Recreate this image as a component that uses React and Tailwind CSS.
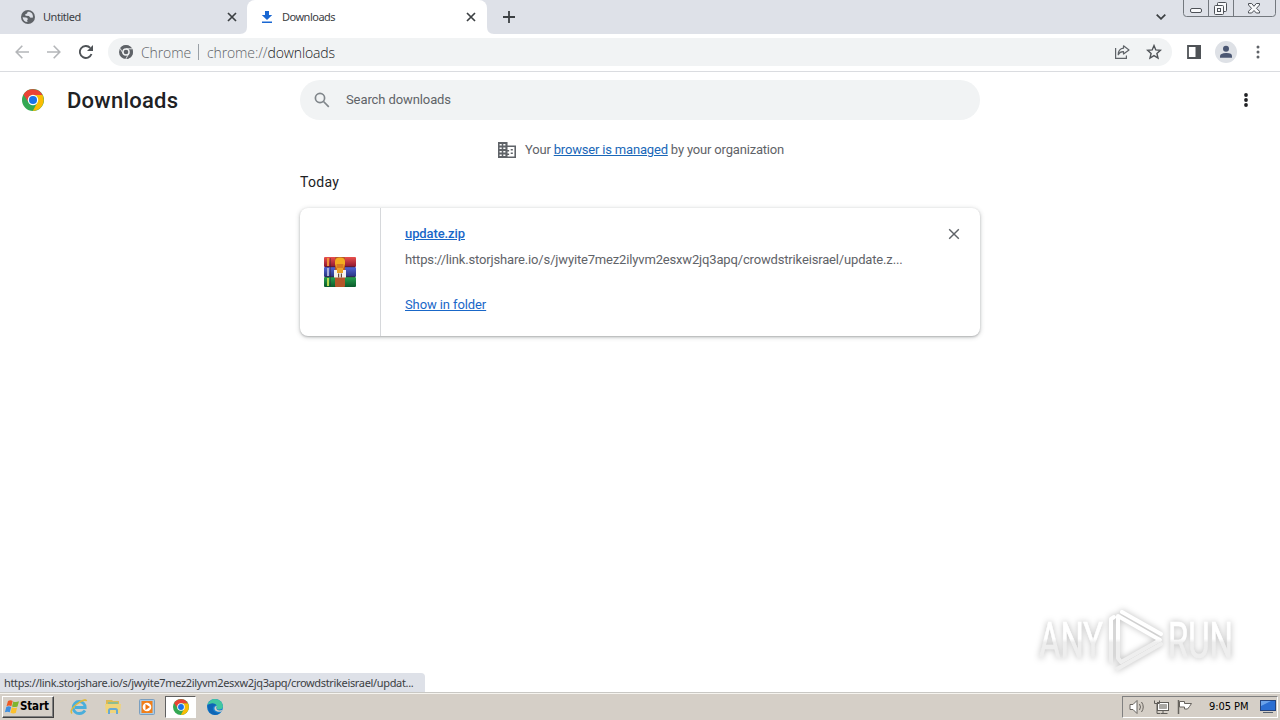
import React from "react";

function ChromeLogo({ size, mono = false }) {
  const c = mono ? ["#5f6368", "#5f6368", "#5f6368", "#5f6368", "#f1f3f4"] : ["#ea4335", "#fbbc04", "#34a853", "#1a73e8", "#fff"];
  return (
    <svg width={size} height={size} viewBox="0 0 48 48" className="shrink-0">
      <circle cx="24" cy="24" r="24" fill={c[2]} />
      <path d="M24 13h20.8A24 24 0 0 1 23.5 48L33.5 29.5A11 11 0 0 0 24 13Z" fill={c[1]} />
      <path d="M3.2 12A24 24 0 0 1 44.8 13H24a11 11 0 0 0-9.5 16.5Z" fill={c[0]} />
      {mono && <path d="M24 13h21M33.5 29.5 23.5 48M14.5 29.5 3.2 11" stroke="#f1f3f4" strokeWidth="3" fill="none" />}
      <circle cx="24" cy="24" r={mono ? 13 : 11.5} fill={c[4]} />
      <circle cx="24" cy="24" r={mono ? 8 : 8.8} fill={c[3]} />
    </svg>
  );
}

function Cross({ size, color, width }) {
  return (
    <svg width={size} height={size} viewBox="0 0 10 10" className="shrink-0">
      <path d="M1 1 9 9M9 1 1 9" stroke={color} strokeWidth={width} />
    </svg>
  );
}

function Dots({ color, r }) {
  return (
    <svg width="6" height="16" viewBox="0 0 6 16" className="shrink-0">
      <circle cx="3" cy="3" r={r} fill={color} />
      <circle cx="3" cy="8" r={r} fill={color} />
      <circle cx="3" cy="13" r={r} fill={color} />
    </svg>
  );
}

function TabStrip() {
  return (
    <div className="flex h-[34px] shrink-0 bg-[#dee1e8] font-['Noto_Sans',sans-serif] text-[11px] text-[#3c4043]">
      <div className="flex w-[247px] items-center pl-[21px] pr-[10px]">
        <svg width="14" height="14" viewBox="0 0 14 14" className="shrink-0">
          <circle cx="7" cy="7" r="7" fill="#5f6368" />
          <path d="M1.6 7.2 5 7.4q1.8.1 1.8 1.8l-.7 1.2.5 1.6Q2.2 11.8 1.6 7.2Z" fill="#dee1e8" />
          <path d="M6.7 1.8 6 3.4l-1.8.9.3 1.5 3.4.1 1.6 1.9 2.5-.3Q12 2.600 8.300 1.800Z" fill="#dee1e8" />
        </svg>
        <span className="ml-2 tracking-[-0.45px]">Untitled</span>
        <span className="ml-auto"><Cross size={10} color="#3c4043" width={1.7} /></span>
      </div>
      <div className="relative flex w-[240px] items-center rounded-t-lg bg-white pl-[14px] pr-[11px]">
        <svg width="7" height="7" viewBox="0 0 7 7" className="absolute -left-[7px] bottom-0"><path d="M7 0v7H0Q7 7 7 0Z" fill="#fff" /></svg>
        <svg width="7" height="7" viewBox="0 0 7 7" className="absolute -right-[7px] bottom-0"><path d="M0 0v7h7Q0 7 0 0Z" fill="#fff" /></svg>
        <svg width="12" height="14" viewBox="0 0 12 14" className="shrink-0">
          <path d="M4 1h4v4h3.200L6 10 .8 5H4Z" fill="#1967d2" />
          <path d="M1 11.500h10v1.500H1Z" fill="#1967d2" />
        </svg>
        <span className="ml-[9px] tracking-[-0.5px]">Downloads</span>
        <span className="ml-auto"><Cross size={10} color="#3c4043" width={1.7} /></span>
      </div>
      <div className="flex items-center pl-4">
        <svg width="12" height="12" viewBox="0 0 12 12"><path d="M6 0v12M0 6h12" stroke="#3c4043" strokeWidth="1.800" /></svg>
      </div>
      <div className="ml-auto flex">
        <div className="flex w-[27px] items-center">
          <svg width="10" height="6" viewBox="0 0 10 6"><path d="m.7.7 4.300 4.100L9.300.7" fill="none" stroke="#3c4043" strokeWidth="1.800" /></svg>
        </div>
        <svg width="97" height="18" viewBox="0 0 97 18" fill="none" stroke="#73787e">
          <path d="M.5 0v13.500q0 3 3 3h86q3 0 3-3V0M25.500 0v16M50.500 0v16" strokeWidth="1" />
          <g stroke="#4d5157" fill="#f8f9fb">
            <rect x="7.500" y="8.500" width="11" height="4" rx="1.500" />
            <rect x="34.500" y="2.500" width="9" height="9" rx="1" />
            <rect x="31.500" y="5.500" width="9" height="9" rx="1" />
            <rect x="34.500" y="8.500" width="3" height="3" />
            <path d="M65.500 3.500h3.200l2.300 2.800 2.300-2.800h3.200v1.500L73.500 8.300l3 3v1.700h-3.200l-2.300-2.500-2.300 2.500h-3.200v-1.700l3-3-3-3.300Z" />
          </g>
        </svg>
      </div>
    </div>
  );
}

function Toolbar() {
  return (
    <div className="flex h-[38px] shrink-0 items-center border-b border-[#dadce0] bg-white pb-px pl-[15px] pr-[19px]">
      <svg width="14" height="14" viewBox="0 0 14 14" fill="none" stroke="#b4b6b9" strokeWidth="1.600"><path d="M14 7H1.500M7.300.8 1.200 7l6.100 6.200" /></svg>
      <svg width="14" height="14" viewBox="0 0 14 14" fill="none" stroke="#b4b6b9" strokeWidth="1.600" className="ml-[18px]"><path d="M0 7h12.500M6.700.8 12.800 7l-6.100 6.200" /></svg>
      <svg width="14" height="14" viewBox="0 0 14 14" className="ml-[18px]">
        <path d="M12.500 9A6 6 0 1 1 11.200 2.800" fill="none" stroke="#4f5357" strokeWidth="1.900" />
        <path d="M14 0v6H8Z" fill="#4f5357" />
      </svg>
      <div className="ml-[15px] flex h-7 w-[1064px] items-center rounded-full bg-[#f1f3f4] pl-[11px] pr-[10px] font-['Open_Sans',sans-serif] text-[14px] font-light text-[#5f6368]">
        <ChromeLogo size={14} mono />
        <span className="ml-2 w-[49px] whitespace-nowrap tracking-[-0.1px]">Chrome</span>
        <span className="ml-2 h-4 w-px bg-[#9aa0a6]" />
        <span className="ml-2 whitespace-nowrap tracking-[-0.12px]">chrome://<span className="text-[#202124]">downloads</span></span>
        <svg width="16" height="14" viewBox="0 0 16 14" className="ml-auto" fill="none" stroke="#5f6368" strokeWidth="1.200">
          <path d="M1.600 3v10.400h10.800V10.500" />
          <path d="M9.500.8 15 4.900 9.500 9V6.700Q6 6.500 4.200 9.800 4.300 3.800 9.500 3.200Z" strokeLinejoin="round" />
        </svg>
        <svg width="16" height="16" viewBox="0 0 16 16" className="ml-4" fill="none" stroke="#4f5357" strokeWidth="1.400"><path d="m8 1.600 1.800 4.300 4.600.4-3.500 3.100 1.100 4.600L8 11.600 4 14l1.100-4.600L1.600 6.300l4.600-.4Z" /></svg>
      </div>
      <svg width="14" height="14" viewBox="0 0 14 14" className="ml-[15px]"><path d="M1 1h12v12H1Z" fill="#fff" stroke="#4f5357" strokeWidth="1.800" /><path d="M8.500 0H14v14H8.500Z" fill="#4f5357" /></svg>
      <svg width="22" height="22" viewBox="0 0 22 22" className="ml-[14px]"><circle cx="11" cy="11" r="11" fill="#dee1e6" /><circle cx="11" cy="7.800" r="3" fill="#4a5672" /><path d="M5 16.800v-1.600Q5 12.200 11 12t6 3.200v1.600Z" fill="#4a5672" /></svg>
      <span className="ml-auto"><Dots color="#5f6368" r={1.5} /></span>
    </div>
  );
}

function ArchiveIcon() {
  return (
    <svg width="32" height="32" viewBox="0 0 32 32">
      <defs>
        <linearGradient id="red" x2="0" y2="1"><stop stopColor="#e9504c" /><stop offset="1" stopColor="#8d1530" /></linearGradient>
        <linearGradient id="blue" x2="0" y2="1"><stop stopColor="#5365d8" /><stop offset="1" stopColor="#27347f" /></linearGradient>
        <linearGradient id="green" x2="0" y2="1"><stop stopColor="#26a34e" /><stop offset="1" stopColor="#0b5a2c" /></linearGradient>
      </defs>
      <rect x="0" y="1" width="32" height="10" rx="1" fill="url(#red)" />
      <rect x="0" y="11" width="32" height="10" rx="1" fill="url(#blue)" />
      <rect x="0" y="21" width="32" height="10" rx="1" fill="url(#green)" />
      <path d="M1 10.800h30M1 20.800h30" stroke="#3a2030" strokeWidth=".7" />
      <path d="M4 2v8" stroke="#f0903a" strokeWidth="2" />
      <path d="M4 12v8" stroke="#aab0d8" strokeWidth="2" />
      <path d="M4 22v8" stroke="#b8d850" strokeWidth="2" />
      <path d="M6.500 2v28" stroke="#301c30" strokeOpacity=".4" />
      <rect x="11" y="1" width="10" height="30" rx="1" fill="#b5562a" />
      <path d="M11 8V5.500q0-4 5-4t5 4V8l-1.500 4h-7Z" fill="#f3ad20" />
      <path d="M12.500 8h7v6h-7Z" fill="#d87a22" />
      <path d="M10 14h3.500v2h5v-2H22v7.500H10Z" fill="#f5f2ee" />
      <path d="M13 12h6v5h-6Z" fill="#eba128" />
      <path d="M14 17.500h1.200v4H14ZM16.800 17.500H18v4h-1.200Z" fill="#6b4a3a" />
    </svg>
  );
}

function Downloads() {
  return (
    <main className="flex min-h-0 grow flex-col bg-white font-[Roboto,sans-serif] text-[13px] text-[#5f6368]">
      <header className="flex h-14 shrink-0 items-center pl-[22px] pr-[31px]">
        <ChromeLogo size={22} />
        <h1 className="ml-[23px] w-[233px] text-[22px] font-medium tracking-[0.25px] text-[#202124]">Downloads</h1>
        <div className="flex h-10 w-[680px] items-center rounded-full bg-[#f1f3f4] pl-[14px]">
          <svg width="16" height="16" viewBox="0 0 16 16" fill="none" stroke="#80868b" strokeWidth="1.700"><circle cx="6" cy="6" r="4.600" /><path d="m9.500 9.500 5.300 5.300" /></svg>
          <span className="ml-4 tracking-[-0.1px]">Search downloads</span>
        </div>
        <span className="ml-auto"><Dots color="#202124" r={1.9} /></span>
      </header>
      <div className="mt-[12px] flex h-5 items-center pl-[498px]">
        <svg width="18" height="16" viewBox="0 0 17 16" preserveAspectRatio="none" className="shrink-0">
          <path d="M0 0h9v3.500h8V16H0Z" fill="#5f6368" />
          <path d="M1.500 2h2v1.500h-2ZM5 2h2v1.500H5ZM1.500 5.500h2V7h-2ZM5 5.500h2V7H5ZM1.500 9h2v1.500h-2ZM5 9h2v1.500H5ZM1.500 12.500h2V14h-2ZM5 12.500h2V14H5ZM9 5h6.500v9.500H9V13h1.500v-1.500H9v-2h1.500V8H9Z" fill="#fff" />
          <path d="M12 7h2v1.600h-2ZM12 10.500h2v1.600h-2Z" fill="#5f6368" />
        </svg>
        <span className="ml-[9px] whitespace-pre tracking-[-0.18px]">Your <a className="text-[#1967b8] underline">browser is managed</a> by your organization</span>
      </div>
      <h2 className="mt-[12px] h-5 pl-[300px] text-[14px] leading-[21px] tracking-[0.3px] text-[#202124]">Today</h2>
      <article className="ml-[300px] mt-4 flex h-32 w-[680px] shrink-0 rounded-lg bg-white shadow-[0_1px_2px_rgba(60,64,67,0.3),0_1px_4px_1px_rgba(60,64,67,0.18)]">
        <div className="flex w-[81px] items-center justify-center border-r border-[#d6d8db]"><ArchiveIcon /></div>
        <div className="flex grow flex-col pl-6 pt-4">
          <div className="flex h-5 items-center pr-[20px]">
            <a className="font-medium tracking-[-0.1px] text-[#1967c8] underline">update.zip</a>
            <span className="ml-auto"><Cross size={12} color="#5f6368" width={1.2} /></span>
          </div>
          <p className="mt-[6px] h-5 whitespace-nowrap leading-5 tracking-[-0.16px]">https://link.storjshare.io/s/jwyite7mez2ilyvm2esxw2jq3apq/crowdstrikeisrael/update.z...</p>
          <a className="mt-[25px] h-5 leading-5 tracking-[-0.1px] text-[#1967c8] underline">Show in folder</a>
        </div>
      </article>
    </main>
  );
}

function Watermark() {
  return (
    <svg width="255" height="80" viewBox="0 0 255 80" className="absolute left-[1025px] top-[600px] drop-shadow-[0_0_3px_rgba(0,0,0,0.28)]">
      <defs><linearGradient id="mark" gradientUnits="userSpaceOnUse" x1="0" y1="10" x2="0" y2="70"><stop offset=".48" stopColor="#fff" /><stop offset=".54" stopColor="#eeeeee" /></linearGradient></defs>
      <g fill="url(#mark)" stroke="url(#mark)" strokeWidth=".7" fontFamily="Roboto, sans-serif" fontSize="50">
        <text x="14" y="58" textLength="64" lengthAdjust="spacingAndGlyphs">ANY</text>
        <text x="143" y="58" textLength="65" lengthAdjust="spacingAndGlyphs">RUN</text>
      </g>
      <g fill="none" stroke="url(#mark)" strokeWidth="4" strokeLinejoin="round" strokeLinecap="round">
        <path d="M93 58V16l42 24-39 22Z" />
        <path d="M86 62V19l3-2M92 69l44-25M97 12l39 22" />
      </g>
    </svg>
  );
}

function StatusBubble() {
  return (
    <div className="absolute left-0 top-[673px] h-[19px] w-[425px] whitespace-nowrap rounded-tr bg-[#dee1e8] pl-1 font-['Noto_Sans',sans-serif] text-[11px] leading-[19px] tracking-[-0.34px] text-[#3c4043]">
      https://link.storjshare.io/s/jwyite7mez2ilyvm2esxw2jq3apq/crowdstrikeisrael/updat...
    </div>
  );
}

function Taskbar() {
  return (
    <footer className="flex h-[28px] shrink-0 items-center border-t border-[#c9c8c4] bg-[#d5cfc7] pl-0.5 pr-0.5 font-['DejaVu_Sans_Condensed','DejaVu_Sans',sans-serif] text-[11px] text-black shadow-[inset_0_1px_0_#f6f4ef]">
      <div className="flex h-[22px] w-[52px] items-center border border-b-[#404040] border-l-white border-r-[#404040] border-t-white pl-px shadow-[inset_-1px_-1px_0_#808080]">
        <svg width="16" height="16" viewBox="0 0 15 16" className="shrink-0">
          <path d="M3.500 2q2.500-1.500 4.700 0L6.900 7.200Q4.500 6 2 7.200Z" fill="#ee5a24" />
          <path d="M8.800 2.500q2.500 1.200 5.700-.2L13 7.500Q10 8.600 7.500 7.400Z" fill="#7fb52e" />
          <path d="M1.800 7.900q2.400-1.300 4.900 0L5.300 13.300Q3 12 .4 13.300Z" fill="#3f8fe0" />
          <path d="M7.300 8.300q2.600 1.300 5.300.2L11.300 14q-2.700 1-5.300-.2Z" fill="#fbc02d" />
        </svg>
        <b className="pt-px text-[11.5px] tracking-[-0.15px]">Start</b>
      </div>
      <svg width="18" height="18" viewBox="0 0 18 18" className="ml-[16px]" fill="none">
        <path d="M15 12.500Q13 15.500 9.500 15.500A6 6 0 1 1 15.200 9.500H5" stroke="#4aaedb" strokeWidth="2.800" />
        <path d="M2 15.500Q-1 12 7 6T16.500 3Q16.500 1 12 3" stroke="#dfb93c" strokeWidth="1.500" />
      </svg>
      <svg width="16" height="16" viewBox="0 0 16 16" className="ml-[17px]">
        <path d="M1 1h6l1 1h6v4H1Z" fill="#dcb953" /><path d="M3 3h10v4H3Z" fill="#8fbd90" /><path d="M0 5h16l-1 9H1Z" fill="#f0d47a" />
        <path d="M4 15v-3.500q0-1.500 1.500-1.500h5q1.500 0 1.500 1.500V15" fill="none" stroke="#68a9d3" strokeWidth="2" />
      </svg>
      <svg width="16" height="16" viewBox="0 0 16 16" className="ml-[18px]">
        <rect x=".5" y=".5" width="15" height="15" rx="1" fill="#a9cbe6" stroke="#7a9fc0" /><rect x="2.500" y="2" width="11" height="12" fill="#f07f1a" />
        <circle cx="8" cy="8" r="4.300" fill="#fff" /><path d="M6.500 5v6L11 8Z" fill="#ee7410" />
      </svg>
      <div className="ml-[10px] flex h-[22px] w-[31px] items-center justify-center border border-b-white border-l-[#606060] border-r-white border-t-[#606060] bg-white"><ChromeLogo size={16} /></div>
      <svg width="16" height="16" viewBox="0 0 16 16" className="ml-[11px]">
        <circle cx="8" cy="8" r="8" fill="#1580d0" />
        <path d="M.5 5.500Q3 0 8 0q7.500.5 8 7.500-.5 3.500-5 3-2-.5-1-2.500Q9.500 3.500.5 5.500Z" fill="#42c7a0" />
        <path d="M.3 6.200Q6 2.500 9.500 6 5 7 6 10.500q1.500 4 7.500 3.300Q7 18.500 2 13Z" fill="#0f65b5" />
        <path d="M9.800 7Q8.500 9.500 10 10.800q2.500 1.500 5.500 0l-1.500 2Q7.800 13 7.500 10T9.800 7Z" fill="#d5cfc7" />
      </svg>
      <div className="ml-auto flex h-[22px] w-[156px] items-center border border-b-white border-l-[#808080] border-r-white border-t-[#808080] pl-[6px]">
        <svg width="17" height="16" viewBox="0 0 17 16" fill="none" stroke="#67635e">
          <path d="M1 5.500h3l4-4v13l-4-4H1Z" fill="#fff" /><path d="M10.500 5q2 3 0 6M12.500 3q3.500 5 0 10" />
        </svg>
        <svg width="17" height="16" viewBox="0 0 17 16" className="ml-[7px]" fill="#fff" stroke="#5f5c58">
          <rect x="4.500" y="3.500" width="11" height="8" /><path d="M6.500 5.500h7v4h-7Z" fill="#a9a7a3" stroke="#a9a7a3" /><path d="M7.500 14.500h7M10 12v2" />
          <path d="M1.500 1.500v3h5v-3M4 4.500v10h3" fill="none" />
        </svg>
        <svg width="17" height="16" viewBox="0 0 17 16" className="ml-[6px]" fill="#fff" stroke="#67635e">
          <path d="M2.500 1v14" strokeWidth="1.500" /><path d="M3.500 2.500h5v2h7l-2 3-2 2.500h-3v-2h-5Z" />
        </svg>
        <span className="ml-[16px] w-[44px] whitespace-nowrap pt-[2px] tracking-[-0.05px]">9:05 PM</span>
        <svg width="16" height="15" viewBox="0 0 16 15" className="ml-auto mr-px">
          <rect x=".5" y="1.500" width="15" height="10" fill="#2b6ed2" stroke="#24437e" /><path d="M1 2h10L1 7Z" fill="#6aa2ea" /><path d="M3 13.500h10" stroke="#56606e" />
        </svg>
      </div>
    </footer>
  );
}

export default function App() {
  return (
    <div className="relative flex h-[720px] w-[1280px] flex-col overflow-hidden bg-white">
      <TabStrip />
      <Toolbar />
      <Downloads />
      <Taskbar />
      <StatusBubble />
      <Watermark />
    </div>
  );
}
